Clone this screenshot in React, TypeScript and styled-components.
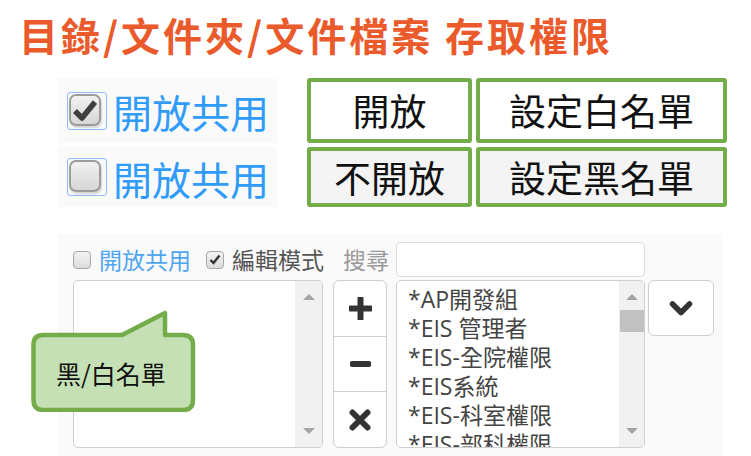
import React from 'react'
import styled, { createGlobalStyle } from 'styled-components'

const GlobalStyle = createGlobalStyle`
  html, body { margin: 0; padding: 0; background: #fff; }
  body { font-family: "Noto Sans CJK TC", "Noto Sans", sans-serif; }
  * { box-sizing: border-box; }
`

const Page = styled.div`
  position: relative;
  width: 751px;
  height: 456px;
  overflow: hidden;
`

const Title = styled.h1`
  margin: 0;
  padding: 11px 0 0 19px;
  font-size: 39px;
  line-height: 46px;
  font-weight: 700;
  letter-spacing: 3px;
  color: #eb5a2b;
  white-space: nowrap;
`

const TopBlock = styled.div`
  margin: 21px 0 0 58px;
  display: flex;
  flex-direction: column;
  gap: 4px;
`

const TopRow = styled.div<{ $h: number }>`
  display: flex;
  height: ${p => p.$h}px;
`

const ShareCell = styled.div`
  width: 219px;
  background: #fafafa;
  display: flex;
  align-items: center;
  padding-left: 9px;
  gap: 6px;
`

const ShareText = styled.span`
  font-size: 39px;
  line-height: 1;
  color: #2f9bfb;
  margin-top: 2px;
`

const BigCheckRing = styled.span`
  width: 40px;
  height: 38px;
  border: 1.5px solid #92b8f6;
  border-radius: 3px;
  padding: 1px 0 0 1px;
  display: flex;
`

const BigCheckBox = styled.span`
  width: 32px;
  height: 32px;
  border: 2.5px solid #9c9c9c;
  border-radius: 7px;
  background: linear-gradient(#f2f2f2, #d6d6d6);
  box-shadow: 1px 2px 2px rgba(0, 0, 0, 0.15);
  display: flex;
  align-items: center;
  justify-content: center;
`

const ModeButton = styled.div<{ $w: number; $gap: number; $grey?: boolean }>`
  width: ${p => p.$w}px;
  margin-left: ${p => p.$gap}px;
  border: 4.5px solid #72ad4a;
  border-radius: 3px;
  background: ${p => (p.$grey ? '#f4f4f4' : '#fff')};
  display: flex;
  align-items: center;
  justify-content: center;
  font-size: 37px;
  color: #111;
  line-height: 1;
`

const Panel = styled.div`
  margin: 27px 0 0 58px;
  width: 665px;
  background: #fafafa;
  padding: 8px 0 10px 15px;
`

const Toolbar = styled.div`
  display: flex;
  align-items: center;
  height: 35px;
`

const SmallCheck = styled.span<{ $gap: number }>`
  width: 18px;
  height: 18px;
  border: 1.5px solid #a8a8a8;
  border-radius: 4px;
  background: linear-gradient(#f4f4f4, #dcdcdc);
  margin-right: ${p => p.$gap}px;
  display: flex;
  align-items: center;
  justify-content: center;
`

const ToolLabel = styled.span<{ $color: string; $gap: number }>`
  font-size: 23px;
  line-height: 1;
  color: ${p => p.$color};
  margin-right: ${p => p.$gap}px;
`

const SearchInput = styled.div`
  width: 249px;
  height: 35px;
  background: #fff;
  border: 1px solid #dcdcdc;
  border-radius: 4px;
`

const ListsRow = styled.div`
  margin-top: 3px;
  display: flex;
  align-items: flex-start;
  height: 168px;
`

const ListBox = styled.div<{ $w: number; $gap: number }>`
  width: ${p => p.$w}px;
  height: 168px;
  margin-left: ${p => p.$gap}px;
  background: #fff;
  border: 1px solid #cfcfcf;
  border-radius: 5px;
  display: flex;
  overflow: hidden;
`

const ListItems = styled.div`
  flex: 1;
  padding: 4px 0 0 11px;
  overflow: hidden;
`

const ListItem = styled.div`
  font-family: "Open Sans", "Noto Sans CJK TC", sans-serif;
  font-size: 23px;
  line-height: 29px;
  height: 29px;
  color: #444;
  white-space: nowrap;
`

const ScrollTrack = styled.div<{ $w: number }>`
  width: ${p => p.$w}px;
  background: #f1f1f1;
  position: relative;
  display: flex;
  flex-direction: column;
  align-items: center;
  justify-content: space-between;
  padding: 13px 0 13px;
`

const Arrow = styled.span<{ $down?: boolean }>`
  width: 0;
  height: 0;
  border-left: 6px solid transparent;
  border-right: 6px solid transparent;
  ${p =>
    p.$down
      ? 'border-top: 6px solid #a3a3a3;'
      : 'border-bottom: 6px solid #a3a3a3;'}
`

const Thumb = styled.span`
  position: absolute;
  left: 1px;
  right: 0;
  top: 29px;
  height: 22px;
  background: #c1c1c1;
`

const ButtonStack = styled.div`
  width: 54px;
  height: 168px;
  margin-left: 10px;
  background: #fff;
  border: 1px solid #cfcfcf;
  border-radius: 6px;
  display: flex;
  flex-direction: column;
  overflow: hidden;
`

const StackButton = styled.div`
  flex: 1;
  display: flex;
  align-items: center;
  justify-content: center;
  & + & {
    border-top: 1px solid #cfcfcf;
  }
`

const DropButton = styled.div`
  width: 66px;
  height: 56px;
  margin-left: 3px;
  background: #fff;
  border: 1px solid #cfcfcf;
  border-radius: 6px;
  display: flex;
  align-items: center;
  justify-content: center;
`

const Callout = styled.div`
  position: absolute;
  left: 31px;
  top: 310px;
  width: 165px;
  height: 102px;
`

const CalloutShape = styled.svg`
  position: absolute;
  inset: 0;
`

const CalloutText = styled.span`
  position: absolute;
  left: 25px;
  top: 25px;
  height: 75px;
  display: flex;
  align-items: center;
  font-size: 25px;
  color: #111;
`

const items = ['*AP開發組', '*EIS 管理者', '*EIS-全院權限', '*EIS系統', '*EIS-科室權限', '*EIS-部科權限']

function BigCheck({ checked }: { checked?: boolean }) {
  return (
    <BigCheckRing>
      <BigCheckBox>
        {checked && (
          <svg width="24" height="22" viewBox="0 0 24 22">
            <path d="M2 12 L9 19 L22 3" fill="none" stroke="#3f3f3f" strokeWidth="5.5" strokeLinejoin="round" />
          </svg>
        )}
      </BigCheckBox>
    </BigCheckRing>
  )
}

function Tick() {
  return (
    <svg width="12" height="11" viewBox="0 0 12 11">
      <path d="M1.5 6 L4.5 9 L10.5 1.5" fill="none" stroke="#333" strokeWidth="2.4" />
    </svg>
  )
}

function PlusIcon() {
  return (
    <svg width="23" height="23" viewBox="0 0 23 23">
      <path d="M11.5 1.5 V21.5 M1.5 11.5 H21.5" stroke="#333" strokeWidth="6" strokeLinecap="round" />
    </svg>
  )
}

function MinusIcon() {
  return (
    <svg width="21" height="8" viewBox="0 0 21 8">
      <path d="M2.5 4 H18.5" stroke="#333" strokeWidth="6" strokeLinecap="round" />
    </svg>
  )
}

function TimesIcon() {
  return (
    <svg width="22" height="22" viewBox="0 0 22 22">
      <path d="M3.5 3.5 L18.5 18.5 M18.5 3.5 L3.5 18.5" stroke="#333" strokeWidth="6" strokeLinecap="round" />
    </svg>
  )
}

function ChevronIcon() {
  return (
    <svg width="24" height="17" viewBox="0 0 24 17">
      <path d="M3.5 4 L12 12.5 L20.5 4" fill="none" stroke="#333" strokeWidth="5.5" strokeLinecap="round" strokeLinejoin="round" />
    </svg>
  )
}

export default function App() {
  return (
    <Page>
      <GlobalStyle />
      <Title>目錄/文件夾/文件檔案 存取權限</Title>

      <TopBlock>
        <TopRow $h={65}>
          <ShareCell>
            <BigCheck checked />
            <ShareText>開放共用</ShareText>
          </ShareCell>
          <ModeButton $w={165} $gap={30}>開放</ModeButton>
          <ModeButton $w={251} $gap={4}>設定白名單</ModeButton>
        </TopRow>
        <TopRow $h={60}>
          <ShareCell>
            <BigCheck />
            <ShareText>開放共用</ShareText>
          </ShareCell>
          <ModeButton $w={165} $gap={30} $grey>不開放</ModeButton>
          <ModeButton $w={251} $gap={4} $grey>設定黑名單</ModeButton>
        </TopRow>
      </TopBlock>

      <Panel>
        <Toolbar>
          <SmallCheck $gap={8} />
          <ToolLabel $color="#4ea5f2" $gap={15}>開放共用</ToolLabel>
          <SmallCheck $gap={8}>
            <Tick />
          </SmallCheck>
          <ToolLabel $color="#555" $gap={19}>編輯模式</ToolLabel>
          <ToolLabel $color="#999" $gap={7}>搜尋</ToolLabel>
          <SearchInput />
        </Toolbar>

        <ListsRow>
          <ListBox $w={250} $gap={0}>
            <ListItems />
            <ScrollTrack $w={27}>
              <Arrow />
              <Arrow $down />
            </ScrollTrack>
          </ListBox>

          <ButtonStack>
            <StackButton><PlusIcon /></StackButton>
            <StackButton><MinusIcon /></StackButton>
            <StackButton><TimesIcon /></StackButton>
          </ButtonStack>

          <ListBox $w={249} $gap={9}>
            <ListItems>
              {items.map(t => (
                <ListItem key={t}>{t}</ListItem>
              ))}
            </ListItems>
            <ScrollTrack $w={25}>
              <Arrow />
              <Thumb />
              <Arrow $down />
            </ScrollTrack>
          </ListBox>

          <DropButton>
            <ChevronIcon />
          </DropButton>
        </ListsRow>
      </Panel>

      <Callout>
        <CalloutShape width="165" height="102" viewBox="0 0 165 102">
          <path
            d="M12 25 H91 L134 3 V25 H152 Q162 25 162 35 V90 Q162 100 152 100 H12 Q2.5 100 2.5 90 V35 Q2.5 25 12 25 Z"
            fill="#c5e0b4"
            stroke="#72ad4a"
            strokeWidth="4.5"
            strokeLinejoin="round"
          />
        </CalloutShape>
        <CalloutText>黑/白名單</CalloutText>
      </Callout>
    </Page>
  )
}
